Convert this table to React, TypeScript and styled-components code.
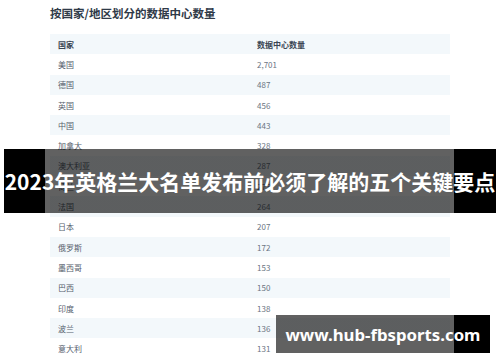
import React from "react";
import styled, { createGlobalStyle } from "styled-components";

const Global = createGlobalStyle`
  html, body { margin: 0; padding: 0; background: #ffffff; }
  body { width: 500px; height: 362px; overflow: hidden; font-family: "Noto Sans CJK SC", "Noto Sans", sans-serif; }
`;

const Page = styled.div`
  position: relative;
  width: 500px;
  height: 362px;
  padding: 5px 50px 0;
  box-sizing: border-box;
`;

const Title = styled.h1`
  margin: 0 0 12px;
  font-size: 11.5px;
  line-height: 17px;
  font-weight: 700;
  color: #2f3a48;
  white-space: nowrap;
`;

const Table = styled.div`
  display: grid;
  grid-template-columns: 200px 200px;
  width: 400px;
`;

const Row = styled.div<{ $striped: boolean }>`
  display: contents;
  & > div {
    background: ${(p) => (p.$striped ? "#f3f8fb" : "#ffffff")};
  }
`;

const Cell = styled.div<{ $head?: boolean; $num?: boolean }>`
  height: 20.3px;
  display: flex;
  align-items: center;
  padding-left: ${(p) => (p.$num ? "7px" : "8px")};
  font-size: 8px;
  font-weight: ${(p) => (p.$head ? 700 : 400)};
  color: ${(p) => (p.$head ? "#3a4553" : p.$num ? "#6a7482" : "#56606d")};
  white-space: nowrap;
`;

const Banner = styled.div`
  position: absolute;
  left: 4px;
  top: 149px;
  width: 492px;
  height: 64px;
  background: linear-gradient(
    to right,
    #000 0,
    #000 41px,
    rgba(0, 0, 0, 0.62) 41px,
    rgba(0, 0, 0, 0.62) 450px,
    #000 450px,
    #000 100%
  );
  display: flex;
  align-items: center;
  justify-content: center;
  color: #ffffff;
  font-family: "Noto Sans CJK SC", sans-serif;
  font-weight: 700;
  font-size: 21px;
  white-space: nowrap;
`;

const Watermark = styled.div`
  position: absolute;
  left: 276px;
  top: 315px;
  width: 214px;
  height: 38px;
  background: linear-gradient(
    to right,
    rgba(0, 0, 0, 0.62) 0,
    rgba(0, 0, 0, 0.62) 178px,
    #000 178px,
    #000 100%
  );
  display: flex;
  align-items: center;
  justify-content: center;
  color: #ffffff;
  font-family: "Noto Sans", sans-serif;
  font-weight: 700;
  font-size: 16.8px;
  white-space: nowrap;
`;

const rows: [string, string][] = [
  ["美国", "2,701"],
  ["德国", "487"],
  ["英国", "456"],
  ["中国", "443"],
  ["加拿大", "328"],
  ["澳大利亚", "287"],
  ["荷兰", "275"],
  ["法国", "264"],
  ["日本", "207"],
  ["俄罗斯", "172"],
  ["墨西哥", "153"],
  ["巴西", "150"],
  ["印度", "138"],
  ["波兰", "136"],
  ["意大利", "131"],
];

export default function App() {
  return (
    <>
      <Global />
      <Page>
        <Title>按国家/地区划分的数据中心数量</Title>
        <Table>
          <Row $striped>
            <Cell $head>国家</Cell>
            <Cell $head $num>
              数据中心数量
            </Cell>
          </Row>
          {rows.map(([c, n], i) => (
            <Row key={c} $striped={i % 2 === 1}>
              <Cell>{c}</Cell>
              <Cell $num>{n}</Cell>
            </Row>
          ))}
        </Table>
        <Banner>2023年英格兰大名单发布前必须了解的五个关键要点</Banner>
        <Watermark>www.hub-fbsports.com</Watermark>
      </Page>
    </>
  );
}
